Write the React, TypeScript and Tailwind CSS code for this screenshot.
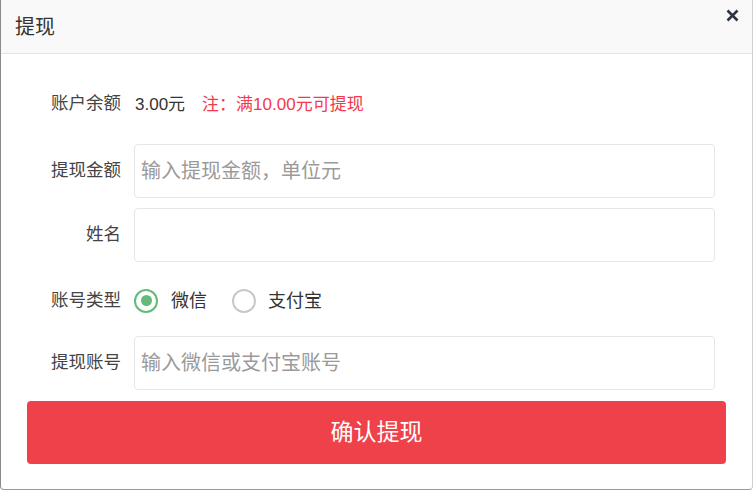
import React from "react";

const font = { fontFamily: '"Liberation Sans", "Noto Sans CJK SC", sans-serif' };

function Label({ children }: { children: React.ReactNode }) {
  return (
    <div className="w-[120px] shrink-0 text-right text-[17.5px] text-[#444] leading-none">{children}</div>
  );
}

function Input({ placeholder }: { placeholder?: string }) {
  return (
    <input
      className="ml-[13px] w-[581px] h-[54px] border border-[#e6e6e6] rounded-[4px] pl-[6px] text-[20px] text-[#333] placeholder:text-[#9a9a9a] outline-none bg-white"
      placeholder={placeholder}
    />
  );
}

export default function App() {
  return (
    <div
      className="w-[753px] h-[490px] bg-white border-l border-b border-r border-l-[#8a8a8a] border-b-[#9a9a9a] border-r-[#d0d0d0] rounded-b-[4px] flex flex-col overflow-hidden"
      style={font}
    >
      <div className="relative h-[54px] shrink-0 bg-[#f9f9f9] border-b border-[#e3e3e3] flex items-center pl-[14px]">
        <span className="text-[20px] text-[#333] leading-none">提现</span>
        <svg className="absolute right-[13px] top-[9px]" width="13" height="13" viewBox="0 0 13 13">
          <path d="M1.5 1.5 L11.5 11.5 M11.5 1.5 L1.5 11.5" stroke="#2d3541" strokeWidth="2.6" strokeLinecap="butt" />
        </svg>
      </div>

      <div className="flex items-center h-[54px] mt-[23px] shrink-0">
        <Label>账户余额</Label>
        <span className="ml-[14px] text-[17px] text-[#333] leading-none">3.00元</span>
        <span className="ml-[17px] text-[17px] text-[#f2394d] leading-none">注：满10.00元可提现</span>
      </div>

      <div className="flex items-center mt-[13px] shrink-0">
        <Label>提现金额</Label>
        <Input placeholder="输入提现金额，单位元" />
      </div>

      <div className="flex items-center mt-[10px] shrink-0">
        <Label>姓名</Label>
        <Input />
      </div>

      <div className="flex items-center h-[54px] mt-[10px] pt-[3px] shrink-0">
        <Label>账号类型</Label>
        <div className="ml-[13px] flex items-center">
          <span className="w-[24px] h-[24px] rounded-full border-2 border-[#62bb76] flex items-center justify-center">
            <span className="w-[11px] h-[11px] rounded-full bg-[#62bb76]" />
          </span>
          <span className="ml-[13px] text-[18px] text-[#333] leading-none">微信</span>
          <span className="ml-[25px] w-[24px] h-[24px] rounded-full border-2 border-[#c8c8c8]" />
          <span className="ml-[12px] text-[18px] text-[#333] leading-none">支付宝</span>
        </div>
      </div>

      <div className="flex items-center mt-[10px] shrink-0">
        <Label>提现账号</Label>
        <Input placeholder="输入微信或支付宝账号" />
      </div>

      <div className="px-[26px] mt-[11px] shrink-0">
        <button className="w-full h-[63px] rounded-[4px] bg-[#ef414a] text-white text-[23px] flex items-center justify-center">
          确认提现
        </button>
      </div>
    </div>
  );
}
